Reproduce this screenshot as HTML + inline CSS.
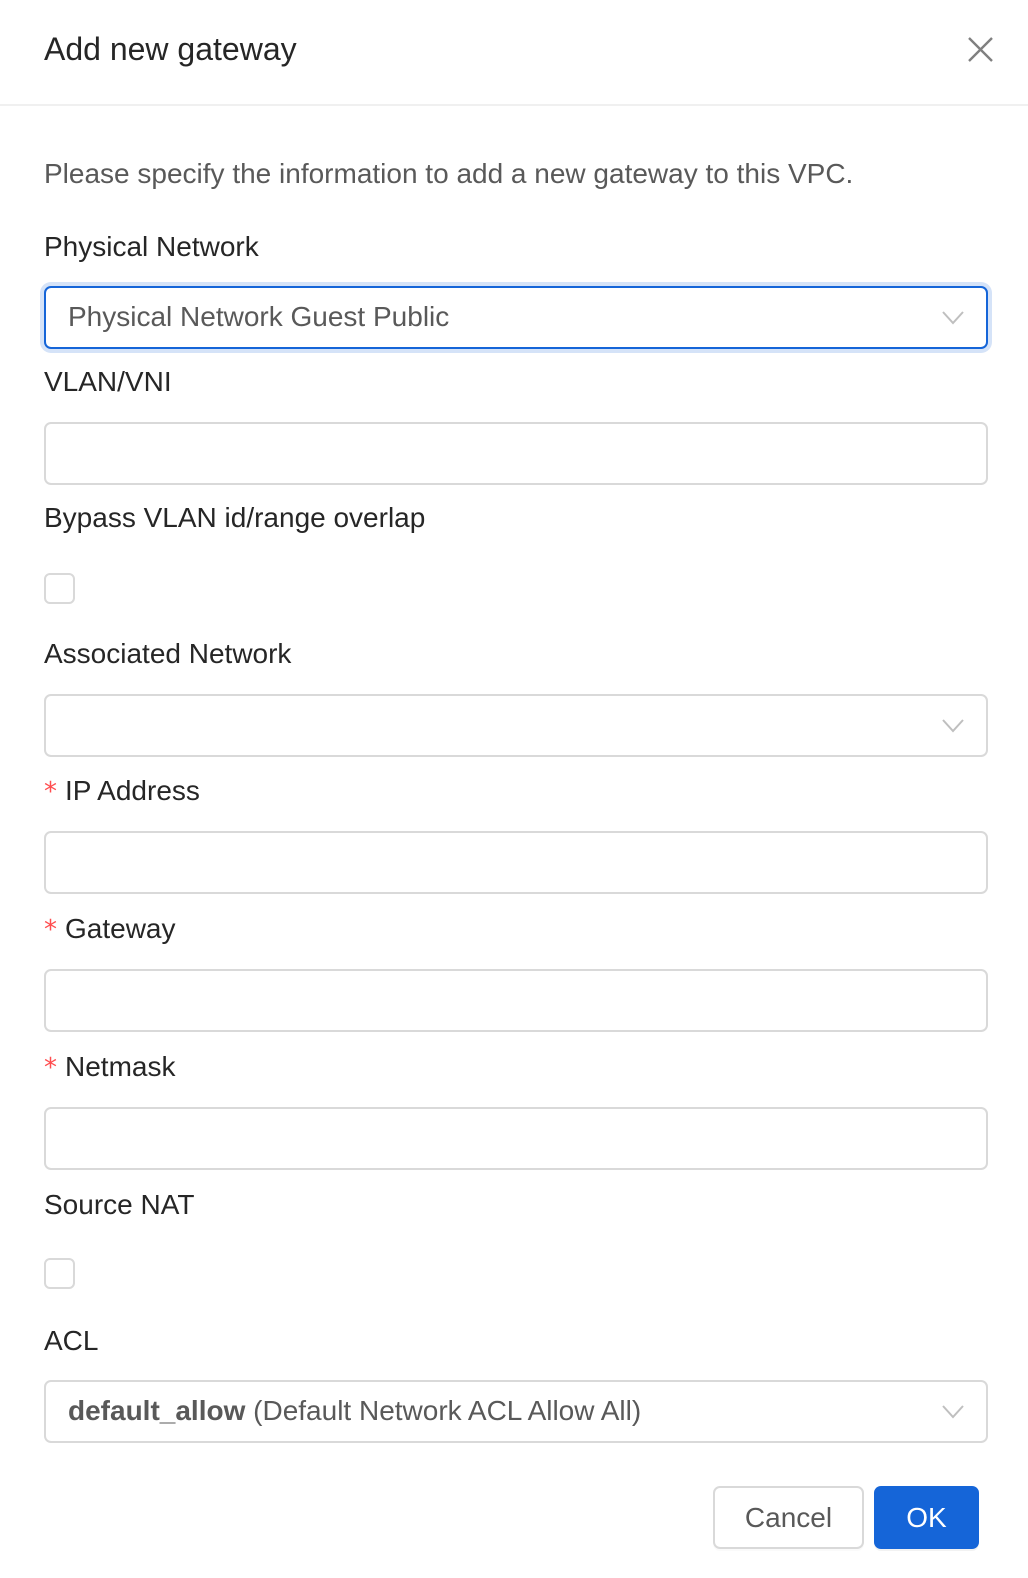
<!DOCTYPE html>
<html><head><meta charset="utf-8"><style>
*{box-sizing:border-box;margin:0;padding:0}
body{width:1028px;height:1578px;background:#fff;font-family:"Liberation Sans",sans-serif;position:relative;overflow:hidden}
.a{position:absolute}
.t{font-size:32px;color:#262626;left:44px;top:29px;line-height:40px}
.hr{left:0;top:104px;width:1028px;height:2px;background:#f0f0f0}
.desc{left:44px;top:158px;font-size:28px;color:#595959;line-height:32px}
.lbl{left:44px;font-size:28px;color:#262626;line-height:32px}
.lbl .s{color:#ff4d4f;font-size:26px;margin-right:8px;font-family:"DejaVu Sans",sans-serif}
.in{left:44px;width:944px;height:63px;border:2px solid #d9d9d9;border-radius:7px;background:#fff}
.foc{border-color:#1565d8;box-shadow:0 0 0 4px rgba(21,101,216,0.18)}
.val{position:absolute;left:22px;top:13px;font-size:28px;color:#595959;line-height:32px}
.chev{position:absolute;right:22px;top:23px}
.cb{left:44px;width:31px;height:31px;border:2px solid #d9d9d9;border-radius:6px}
.btn{height:63px;border-radius:7px;font-size:28px;line-height:59px;text-align:center}
</style></head><body>
<div class="a t">Add new gateway</div>
<svg class="a" style="left:968px;top:37px" width="25" height="25" viewBox="0 0 25 25"><path d="M1 1L24 24M24 1L1 24" stroke="#808080" stroke-width="2.4" fill="none"/></svg>
<div class="a hr"></div>
<div class="a desc">Please specify the information to add a new gateway to this VPC.</div>

<div class="a lbl" style="top:231px">Physical Network</div>
<div class="a in foc" style="top:286px"><span class="val">Physical Network Guest Public</span>
<svg class="chev" width="22" height="14" viewBox="0 0 22 14"><path d="M1 1L11 12L21 1" stroke="#bfbfbf" stroke-width="2" fill="none"/></svg></div>

<div class="a lbl" style="top:366px">VLAN/VNI</div>
<div class="a in" style="top:422px"></div>

<div class="a lbl" style="top:502px">Bypass VLAN id/range overlap</div>
<div class="a cb" style="top:573px"></div>

<div class="a lbl" style="top:638px">Associated Network</div>
<div class="a in" style="top:694px">
<svg class="chev" width="22" height="14" viewBox="0 0 22 14"><path d="M1 1L11 12L21 1" stroke="#bfbfbf" stroke-width="2" fill="none"/></svg></div>

<div class="a lbl" style="top:775px"><span class="s">*</span>IP Address</div>
<div class="a in" style="top:831px"></div>

<div class="a lbl" style="top:913px"><span class="s">*</span>Gateway</div>
<div class="a in" style="top:969px"></div>

<div class="a lbl" style="top:1051px"><span class="s">*</span>Netmask</div>
<div class="a in" style="top:1107px"></div>

<div class="a lbl" style="top:1189px">Source NAT</div>
<div class="a cb" style="top:1258px"></div>

<div class="a lbl" style="top:1325px">ACL</div>
<div class="a in" style="top:1380px"><span class="val"><b>default_allow</b> (Default Network ACL Allow All)</span>
<svg class="chev" width="22" height="14" viewBox="0 0 22 14"><path d="M1 1L11 12L21 1" stroke="#bfbfbf" stroke-width="2" fill="none"/></svg></div>

<div class="a btn" style="left:713px;top:1486px;width:151px;border:2px solid #d9d9d9;color:#595959;box-shadow:0 2px 0 rgba(0,0,0,0.02)">Cancel</div>
<div class="a btn" style="left:874px;top:1486px;width:105px;background:#1565d8;color:#fff;line-height:63px;box-shadow:0 2px 0 rgba(0,0,0,0.05)">OK</div>
</body></html>
